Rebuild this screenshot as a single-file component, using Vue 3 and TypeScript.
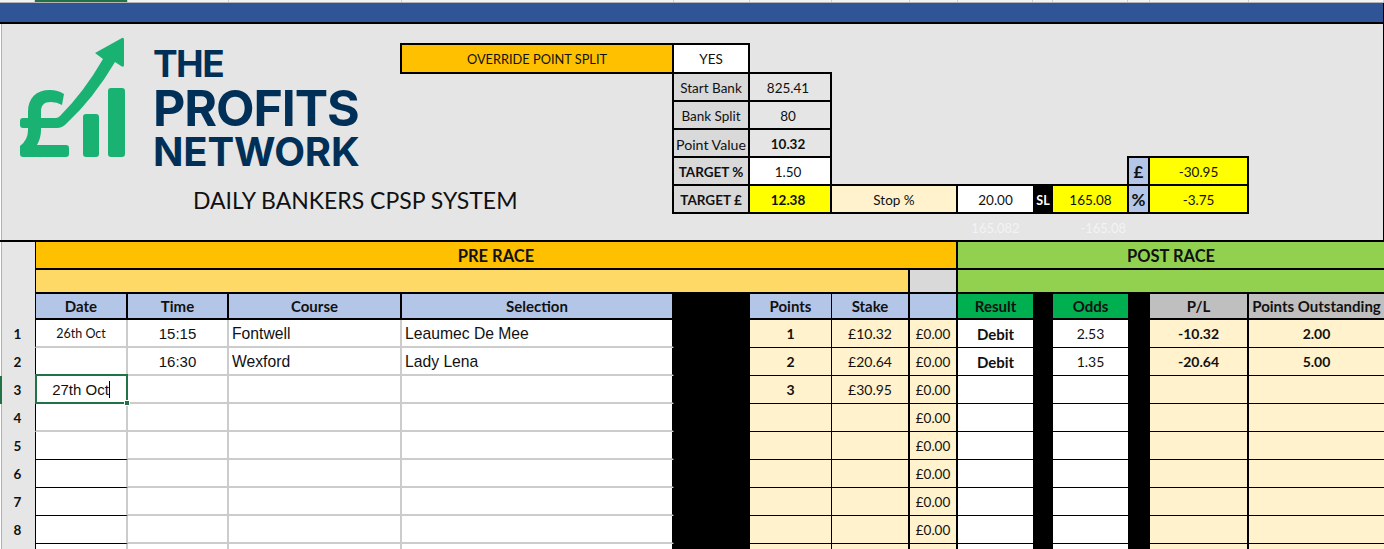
<script setup lang="ts">
interface Row {
  n: number
  date?: string
  time?: string
  course?: string
  selection?: string
  points?: string
  stake?: string
  result?: string
  odds?: string
  pl?: string
  out?: string
}

const rows: Row[] = [
  { n: 1, date: '26th Oct', time: '15:15', course: 'Fontwell', selection: 'Leaumec De Mee', points: '1', stake: '£10.32', result: 'Debit', odds: '2.53', pl: '-10.32', out: '2.00' },
  { n: 2, time: '16:30', course: 'Wexford', selection: 'Lady Lena', points: '2', stake: '£20.64', result: 'Debit', odds: '1.35', pl: '-20.64', out: '5.00' },
  { n: 3, points: '3', stake: '£30.95' },
  { n: 4 },
  { n: 5 },
  { n: 6 },
  { n: 7 },
  { n: 8 },
  { n: 9 },
]

const strip = Array.from({ length: 15 }, (_, i) => i)
</script>

<template>
  <div class="sheet">
    <div class="strip cols">
      <div v-for="i in strip" :key="i" class="tick" :class="{ active: i === 1 }"></div>
    </div>
    <div class="ribbon"></div>

    <section class="panel cols">
      <div class="brand">
        <div class="logo">
          <svg class="mark" viewBox="18 36 108 123" width="108" height="123" aria-hidden="true">
            <g fill="#1ab273">
              <path d="M20 121Q20 118 23 118H56Q58 118 60 116Q84 92 103 59L95 53L122 38Q124 37 124 40L124 65Q124 68 121 66L115 62Q94 98 66 124Q62 128 57 128H23Q20 128 20 125Z" />
              <path d="M64 94Q58 90 50 90C36 90 28 98 28 112V130Q28 140 20 146V154Q20 157 23 157H66Q69 157 69 154V148Q69 145 66 145H37Q41 138 41 130V112C41 105 44 102 51 102Q57 102 62 105Z" />
              <rect x="83" y="114" width="16" height="43" rx="3" />
              <rect x="108" y="88" width="17" height="69" rx="3" />
            </g>
          </svg>
          <div class="wordmark">
            <span class="the">THE</span>
            <span class="profits">PROFITS</span>
            <span class="network">NETWORK</span>
          </div>
        </div>
        <div class="title">DAILY BANKERS CPSP SYSTEM</div>
      </div>

      <div class="c override">OVERRIDE POINT SPLIT</div>
      <div class="c yes">YES</div>

      <div class="c label r3">Start Bank</div>
      <div class="c val r3 first">825.41</div>
      <div class="c label r4">Bank Split</div>
      <div class="c val r4">80</div>
      <div class="c label r5 tight">Point Value</div>
      <div class="c val r5 b">10.32</div>
      <div class="c label r6 b">TARGET %</div>
      <div class="c val r6 white">1.50</div>
      <div class="c label r7 b">TARGET £</div>
      <div class="c val r7 yellow b">12.38</div>

      <div class="c gap-line"></div>
      <div class="c sym r6b">£</div>
      <div class="c res r6b">-30.95</div>

      <div class="c stop">Stop %</div>
      <div class="c pct">20.00</div>
      <div class="c sl">SL</div>
      <div class="c slv">165.08</div>
      <div class="c sym r7b">%</div>
      <div class="c res r7b">-3.75</div>

      <div class="c ghost g1">165.082</div>
      <div class="c ghost g2">-165.08</div>
    </section>

    <section class="table cols">
      <div class="corner"></div>
      <div class="c band pre">PRE RACE</div>
      <div class="c band post">POST RACE</div>
      <div class="c sub-pre"></div>
      <div class="c sub-grey"></div>
      <div class="c sub-post"></div>

      <div class="c hd hd-first edge">Date</div>
      <div class="c hd edge">Time</div>
      <div class="c hd edge">Course</div>
      <div class="c hd edge">Selection</div>
      <div class="c blk"></div>
      <div class="c hd edge1">Points</div>
      <div class="c hd edge">Stake</div>
      <div class="c hd edge"></div>
      <div class="c hd green">Result</div>
      <div class="c blk"></div>
      <div class="c hd green">Odds</div>
      <div class="c blk"></div>
      <div class="c hd grey edge">P/L</div>
      <div class="c hd grey">Points Outstanding</div>

      <template v-for="row in rows" :key="row.n">
        <div class="c rowhead" :class="{ current: row.n === 3 }">{{ row.n < 9 ? row.n : '' }}</div>
        <div class="c cell date" :class="{ soft: row.n <= 4, picked: row.n === 3 }">
          <span v-if="row.n === 3" class="arial">27th Oct<i class="caret"></i></span>
          <span v-else-if="row.date" class="small">{{ row.date }}</span>
          <b v-if="row.n === 3" class="handle"></b>
        </div>
        <div class="c cell soft side arial">{{ row.time }}</div>
        <div class="c cell soft side arial left">{{ row.course }}</div>
        <div class="c cell soft selection arial left">{{ row.selection }}</div>
        <div class="c blk"></div>
        <div class="c cell cream line1 b">{{ row.points }}</div>
        <div class="c cell cream line2">{{ row.stake }}</div>
        <div class="c cell cream line2 zero">{{ row.n < 9 ? '£0.00' : '' }}</div>
        <div class="c cell b debit">{{ row.result }}</div>
        <div class="c blk"></div>
        <div class="c cell">{{ row.odds }}</div>
        <div class="c blk"></div>
        <div class="c cell cream line2 b">{{ row.pl }}</div>
        <div class="c cell cream b">{{ row.out }}</div>
      </template>
    </section>
  </div>
</template>

<style>
html,
body {
  margin: 0;
  background: #fff;
}
</style>

<style scoped>
.sheet {
  width: 1384px;
  height: 549px;
  overflow: hidden;
  position: relative;
  font-family: Lato, "Liberation Sans", sans-serif;
  font-size: 13.5px;
  color: #111;
  background: #fff;
}
.cols {
  display: grid;
  grid-template-columns: 35px 93px 101px 173px 272px 76px 82px 78px 48px 75px 20px 75px 22px 99px 135px;
}
.strip {
  height: 2px;
  background: #f4f4f4;
  border-bottom: 1px solid #b5b5b5;
}
.tick {
  border-right: 1px solid #cfcfcf;
}
.tick.active {
  background: #217346;
}
.ribbon {
  height: 19px;
  background: #2f5597;
  border-bottom: 2px solid #000;
  border-right: 1px solid #000;
}
.panel {
  height: 218px;
  box-sizing: border-box;
  grid-template-rows: 19px 31px 28px 28px 28px 28px 28px 26px;
  background: linear-gradient(90deg, #fff 1px, #b0b0b0 1px 2px, #e5e5e5 2px calc(100% - 1px), #000 calc(100% - 1px));
  border-bottom: 2px solid #000;
}
.c {
  display: flex;
  align-items: center;
  justify-content: center;
  box-sizing: border-box;
  min-width: 0;
  white-space: nowrap;
}
.b {
  font-weight: 700;
}
.brand {
  grid-column: 1 / 6;
  grid-row: 1 / -1;
  padding: 12px 0 0 18px;
}
.logo {
  display: flex;
  gap: 27px;
}
.mark {
  display: block;
  flex: none;
}
.wordmark {
  display: flex;
  flex-direction: column;
  align-items: flex-start;
  font-family: Inter, "Liberation Sans", sans-serif;
  font-weight: 700;
  color: #003057;
  margin-top: 8px;
}
.the {
  font-size: 37px;
  line-height: 39px;
  letter-spacing: -1.6px;
}
.profits {
  font-size: 50px;
  line-height: 50px;
  letter-spacing: -1.1px;
}
.network {
  font-size: 40px;
  line-height: 38px;
  letter-spacing: -0.2px;
}
.title {
  padding-left: 175px;
  margin-top: 14px;
  font-size: 23px;
  line-height: 30px;
  color: #111;
  white-space: nowrap;
}
.override {
  grid-column: 5;
  grid-row: 2;
  margin-left: -2px;
  background: #ffc000;
  border: 2px solid #000;
  font-size: 12.8px;
}
.yes {
  grid-column: 6;
  grid-row: 2;
  background: #fff;
  border: solid #000;
  border-width: 2px 2px 2px 0;
}
.label {
  grid-column: 6;
  margin-left: -2px;
  padding-top: 2px;
  background: #d9d9d9;
  border: solid #000;
  border-width: 0 2px 2px 2px;
}
.tight {
  font-size: 14.2px;
}
.val {
  grid-column: 7;
  padding: 2px 4px 0 0;
  border: solid #000;
  border-width: 0 2px 2px 0;
}
.val.first {
  margin-top: -2px;
  border-top-width: 2px;
}
.r3 { grid-row: 3; }
.r4 { grid-row: 4; }
.r5 { grid-row: 5; }
.r6 { grid-row: 6; }
.r7 { grid-row: 7; }
.white {
  background: #fff;
}
.yellow {
  background: #ff0;
}
.gap-line {
  grid-column: 8 / 13;
  grid-row: 6;
  border-bottom: 2px solid #000;
}
.sym {
  grid-column: 13;
  background: #b4c6e7;
  font-weight: 700;
  font-size: 17px;
  margin-left: -1px;
  border: 2px solid #000;
}
.res {
  grid-column: 14;
  padding-top: 2px;
  background: #ff0;
  border: solid #000;
  border-width: 2px 2px 2px 0;
}
.r6b {
  grid-row: 6;
  margin-top: -2px;
}
.sym.r7b,
.res.r7b {
  grid-row: 7;
  border-top-width: 0;
}
.stop {
  grid-column: 8 / 10;
  grid-row: 7;
  padding-top: 2px;
  background: #fff2cc;
  border: solid #000;
  border-width: 0 2px 2px 0;
}
.pct {
  grid-column: 10;
  grid-row: 7;
  padding-top: 2px;
  background: #fff;
  border-bottom: 2px solid #000;
}
.sl {
  grid-column: 11;
  grid-row: 7;
  background: #000;
  color: #fff;
  font-weight: 700;
  font-size: 12.5px;
}
.slv {
  grid-column: 12;
  grid-row: 7;
  padding-top: 2px;
  background: #ff0;
  border-bottom: 2px solid #000;
}
.ghost {
  grid-row: 8;
  padding-top: 2px;
  color: #f3f3f3;
  font-size: 13px;
}
.g1 {
  grid-column: 10;
}
.g2 {
  grid-column: 12;
  justify-content: flex-end;
  padding-right: 2px;
}
.table {
  grid-template-rows: 28px 24px 26px repeat(9, 28px);
  font-size: 14px;
}
.corner {
  grid-row: span 3;
  background: linear-gradient(90deg, #fff 1px, #b0b0b0 1px 2px, #e6e6e6 2px);
}
.band {
  height: 100%;
  padding-top: 2px;
  font-size: 16.5px;
  font-weight: 700;
  border-bottom: 2px solid #000;
  border-right: 2px solid #000;
}
.pre {
  grid-column: 2 / span 8;
  background: #ffc000;
  border-left: 1px solid #000;
}
.post {
  grid-column: 10 / -1;
  background: #92d050;
  border-right: 0;
}
.sub-pre {
  grid-column: 2 / span 7;
  background: #ffd966;
  border-left: 1px solid #000;
  border-right: 2px solid #000;
  border-bottom: 2px solid #000;
}
.sub-grey {
  background: #d9d9d9;
  border-right: 2px solid #000;
  border-bottom: 2px solid #000;
}
.sub-post {
  grid-column: 10 / -1;
  background: #92d050;
  border-bottom: 2px solid #000;
}
.hd {
  background: #b4c6e7;
  font-size: 15px;
  font-weight: 700;
  border-bottom: 2px solid #000;
}
.hd-first {
  grid-column: 2;
  border-left: 1px solid #000;
}
.edge {
  border-right: 2px solid #000;
}
.edge1 {
  border-right: 1px solid #000;
}
.green {
  background: #00b050;
}
.grey {
  background: #bfbfbf;
}
.blk {
  background: #000;
}
.rowhead {
  grid-column: 1;
  background: linear-gradient(90deg, #fff 1px, #b0b0b0 1px 2px, #e6e6e6 2px);
  font-weight: 700;
  font-size: 13.5px;
  position: relative;
}
.rowhead.current::before {
  content: "";
  position: absolute;
  left: 0;
  top: 0;
  bottom: 0;
  width: 2px;
  background: #217346;
}
.cell {
  background: #fff;
  border-bottom: 1px solid #000;
}
.debit {
  font-size: 15px;
}
.date {
  border-left: 1px solid #000;
  border-right: 2px solid #ccc;
  position: relative;
}
.soft {
  padding-top: 1px;
  border-bottom: 2px solid #ccc;
}
.side {
  border-right: 2px solid #ccc;
}
.selection {
  border-right: 2px solid #000;
}
.left {
  justify-content: flex-start;
  padding-left: 3px;
}
.arial {
  font-family: "Liberation Sans", Arial, sans-serif;
  font-size: 15px;
}
.arial.left {
  font-size: 15.7px;
}
.small {
  font-size: 12.5px;
}
.cream {
  background: #fff2cc;
}
.line1 {
  border-right: 1px solid #000;
}
.line2 {
  border-right: 2px solid #000;
}
.zero {
  font-size: 13.5px;
}
.picked::after {
  content: "";
  position: absolute;
  left: -1px;
  top: -2px;
  right: -2px;
  bottom: -2px;
  border: 2px solid #217346;
  pointer-events: none;
}
.handle {
  position: absolute;
  right: -3px;
  bottom: -3px;
  width: 4px;
  height: 4px;
  background: #217346;
  outline: 1px solid #fff;
  z-index: 1;
}
.caret {
  display: inline-block;
  width: 1px;
  height: 17px;
  background: #000;
  vertical-align: -3px;
}
</style>
